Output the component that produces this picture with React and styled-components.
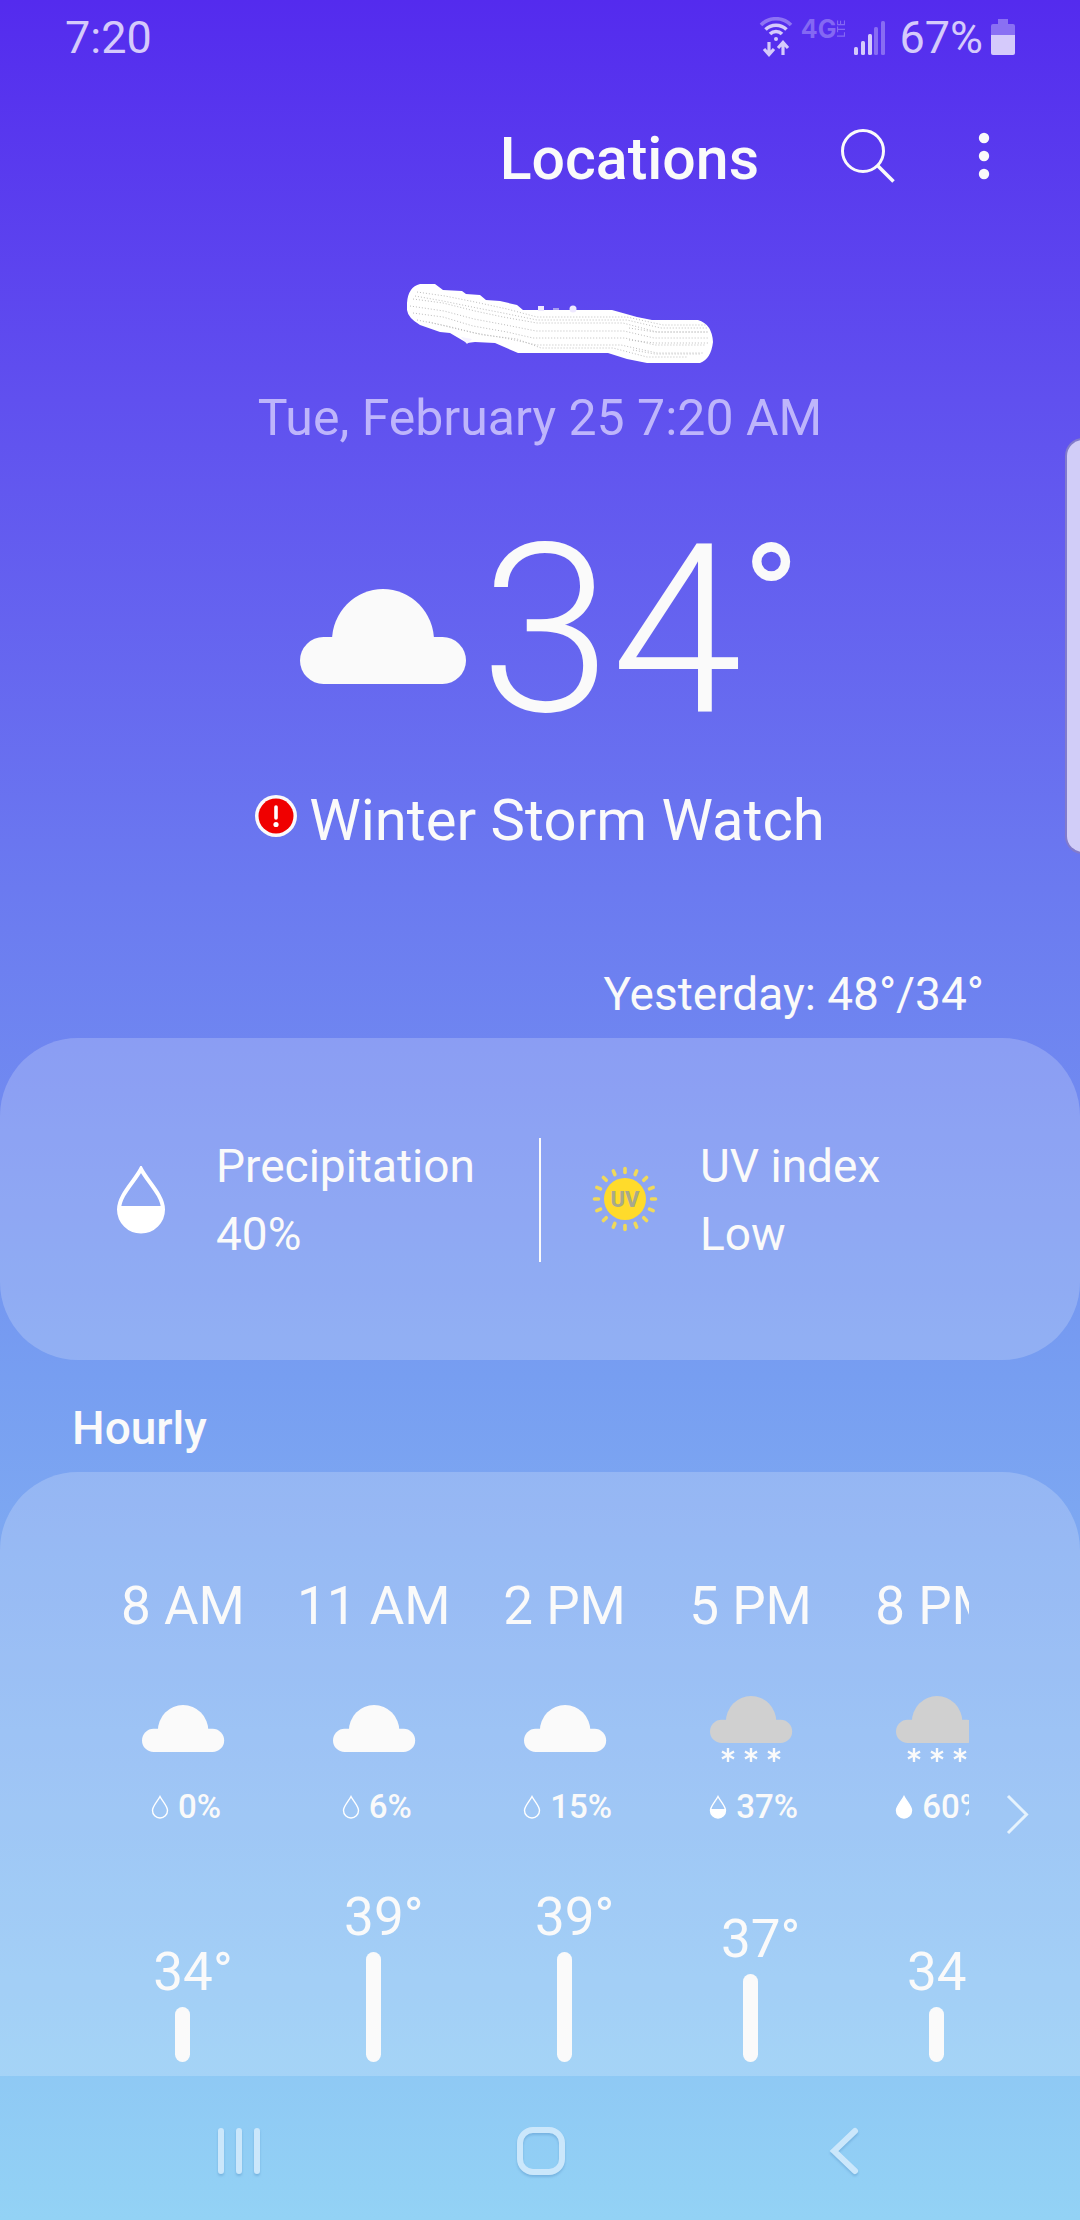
import React from "react";
import styled, { createGlobalStyle } from "styled-components";

const hours = [
  { time: "8 AM", sky: "cloudy", rain: 0, temp: 34 },
  { time: "11 AM", sky: "cloudy", rain: 6, temp: 39 },
  { time: "2 PM", sky: "cloudy", rain: 15, temp: 39 },
  { time: "5 PM", sky: "snow", rain: 37, temp: 37 },
  { time: "8 PM", sky: "snow", rain: 60, temp: 34 },
];

// 34° is the lowest bar, each degree above adds 11px
const barHeight = (temp) => 55 + (temp - 34) * 11;

const CloudShape = ({ fill }) => (
  <g fill={fill}>
    <rect x="0" y="48" width="166" height="47" rx="23.5" />
    <path d="M32 52a51 52 0 0 1 102 0v10H32z" />
  </g>
);

const Snowflake = ({ x }) => (
  <path
    d={`M${x} 54v14M${x - 6} 57.5l12 7M${x + 6} 57.5l-12 7`}
    stroke="#fafafa"
    strokeWidth="2.4"
  />
);

const SkyIcon = ({ sky }) => (
  <svg width="84" height="72" viewBox="0 0 84 72" aria-hidden="true">
    <g transform={sky === "snow" ? "translate(1 2) scale(.495)" : "translate(1 11) scale(.495)"}>
      <CloudShape fill={sky === "snow" ? "#d0d0d0" : "#fafafa"} />
    </g>
    {sky === "snow" && [19, 42, 65].map((x) => <Snowflake key={x} x={x} />)}
  </svg>
);

const DropIcon = ({ rain }) => (
  <svg width="18" height="24" viewBox="0 0 18 24" aria-hidden="true">
    <path
      d="M9 1.5C6.6 6.3 1.5 11.2 1.5 15.5a7.5 7.5 0 0 0 15 0C16.5 11.2 11.4 6.3 9 1.5z"
      fill={rain >= 50 ? "#fff" : "none"}
      stroke="#fff"
      strokeWidth="1.4"
    />
    {rain >= 30 && rain < 50 && (
      <path d="M1.5 14h15v1.5a7.5 7.5 0 0 1-15 0z" fill="#fff" />
    )}
  </svg>
);

const BigDropIcon = () => (
  <svg width="66" height="68" viewBox="0 0 66 68" aria-hidden="true">
    <path
      d="M33 3C27 15 11 29 11 43.5a22 22 0 0 0 44 0C55 29 39 15 33 3z"
      fill="none"
      stroke="#fff"
      strokeWidth="4"
    />
    <path d="M10 40h46v4a23 22.5 0 0 1-46 0z" fill="#fff" />
  </svg>
);

const UvIcon = () => (
  <svg width="66" height="68" viewBox="0 0 66 68" aria-hidden="true">
    <circle cx="33" cy="33" r="21" fill="#ffdb2b" />
    {Array.from({ length: 16 }, (_, i) => (
      <path
        key={i}
        d="M33 2.5v4"
        stroke="#f0d95a"
        strokeWidth="3.6"
        strokeLinecap="round"
        transform={`rotate(${i * 22.5} 33 33)`}
      />
    ))}
    <text
      x="33"
      y="41"
      textAnchor="middle"
      fontFamily="Roboto, sans-serif"
      fontSize="22"
      fontWeight="800"
      fill="#a8a98c"
    >
      UV
    </text>
  </svg>
);

const App = () => {
  return (
    <>
      <GlobalStyle />
      <Screen>
        <StatusBar>
          <span>7:20</span>
          <StatusIcons>
            <svg width="34" height="40" viewBox="0 0 34 40" aria-hidden="true">
              <g fill="none" stroke="#d5cafb" strokeWidth="3.6">
                <path d="M2 8a21 21 0 0 1 30 0" opacity=".45" />
                <path d="M6.5 12.5a15 15 0 0 1 21 0" />
                <path d="M11 17a8.5 8.5 0 0 1 12 0" />
                <path
                  d="M10 25v12M5 32l5 5.5 5-5.5M24 38V26M19 31l5-5.5 5 5.5"
                  strokeWidth="3.2"
                />
              </g>
              <circle cx="17" cy="22" r="2" fill="#d5cafb" />
            </svg>
            <Network>
              4G<Lte>LTE</Lte>
            </Network>
            <svg width="32" height="36" viewBox="0 0 32 36" aria-hidden="true">
              <g fill="#d5cafb">
                <rect x="0" y="28" width="4" height="8" rx="1.5" />
                <rect x="7" y="22" width="4" height="14" rx="1.5" />
                <rect x="14" y="15" width="4" height="21" rx="1.5" />
                <rect x="20" y="8" width="4" height="28" rx="1.5" opacity=".4" />
                <rect x="27" y="2" width="4" height="34" rx="1.5" opacity=".4" />
              </g>
            </svg>
            <Battery>67%</Battery>
            <svg width="24" height="36" viewBox="0 0 24 36" aria-hidden="true">
              <path d="M7 0h10v5h5a2 2 0 0 1 2 2v9H0V7a2 2 0 0 1 2-2h5z" fill="#8a70f3" />
              <path d="M0 16h24v18a2 2 0 0 1-2 2H2a2 2 0 0 1-2-2z" fill="#d5cafb" />
            </svg>
          </StatusIcons>
        </StatusBar>

        <Toolbar>
          <LocationsButton>Locations</LocationsButton>
          <IconButton aria-label="Search">
            <svg width="54" height="58" viewBox="0 0 54 58">
              <circle cx="22" cy="22" r="20.5" fill="none" stroke="#fafafa" strokeWidth="3" />
              <path d="M37 37l15.5 15.5" stroke="#fafafa" strokeWidth="3.5" />
            </svg>
          </IconButton>
          <IconButton aria-label="More options">
            <svg width="14" height="58" viewBox="0 0 14 58">
              <g fill="#fafafa">
                <circle cx="7" cy="9" r="5.2" />
                <circle cx="7" cy="27" r="5.2" />
                <circle cx="7" cy="45" r="5.2" />
              </g>
            </svg>
          </IconButton>
        </Toolbar>

        <Current>
          <svg width="346" height="88" viewBox="0 0 346 88" role="img" aria-label="Hidden city">
            <path
              d="M40 23Q41 7 53 4H68L76 10 95 11 99 14 113 15 119 20 133 21 150 25 156 30H245L270 37 285 40H331Q345 44 346 62 344 79 333 83H280L260 79 241 73H151L128 63 108 62 100 63 83 53 73 52 53 45Q41 38 40 30z"
              fill="#fff"
            />
            <path d="M171 26h6v5h-6z" fill="#eee8ff" />
            <circle cx="206" cy="29" r="3.5" fill="#eee8ff" />
            <path d="M186 29h6" stroke="#aaa0f0" strokeWidth="2" />
            <path d="M94 57l6 7 5-5z" fill="#f5f2ff" />
            <g fill="none" stroke="#bdbdbd" strokeWidth="1" strokeDasharray="1 2">
              <path d="M50 12l28 4 30 6 32 7 30 8h90l36 8h44" />
              <path d="M46 19l30 4 32 8 28 6 34 6h86l34 9h50" />
              <path d="M43 26l34 5 30 8 32 6 30 6h88l30 7h54" />
              <path d="M46 33l30 4 30 9 34 6 26 6h92l30 7h50" />
              <path d="M50 40l30 6 28 7 30 5 32 7h84l36 8h46" />
              <path d="M48 16l28 5 34 7 26 5 34 7h90l34 8h46" />
              <path d="M62 42l24 6 30 7 34 4 24 9h72l34 9h40" />
              <path d="M262 48l26 4h54M262 60l26 3h54M266 70l22 4h46" />
            </g>
          </svg>
          <DateLine>Tue, February 25 7:20 AM</DateLine>
          <TempRow>
            <svg width="166" height="106" viewBox="0 -11 166 106" aria-hidden="true">
              <CloudShape fill="#fafafa" />
            </svg>
            <Temp>34</Temp>
            <Degree>°</Degree>
          </TempRow>
          <AlertLink href="#alert">
            <svg width="42" height="50" viewBox="0 0 42 50" aria-hidden="true">
              <circle cx="21" cy="21" r="21" fill="#fafafa" />
              <circle cx="21" cy="21" r="17.5" fill="#f00000" />
              <path d="M21 12v11" stroke="#fff" strokeWidth="3.6" strokeLinecap="round" />
              <circle cx="21" cy="29.5" r="2.6" fill="#fff" />
            </svg>
            Winter Storm Watch
          </AlertLink>
        </Current>

        <Yesterday>Yesterday: 48°/34°</Yesterday>

        <DetailCard>
          <Detail $left={108}>
            <BigDropIcon />
            <DetailText>
              <div>Precipitation</div>
              <div>40%</div>
            </DetailText>
          </Detail>
          <Divider />
          <Detail $left={51}>
            <UvIcon />
            <DetailText>
              <div>UV index</div>
              <div>Low</div>
            </DetailText>
          </Detail>
        </DetailCard>

        <SectionTitle>Hourly</SectionTitle>

        <HourlyCard>
          <HourList>
            {hours.map((hour) => (
              <Hour key={hour.time}>
                <Time>{hour.time}</Time>
                <SkyIcon sky={hour.sky} />
                <Rain>
                  <DropIcon rain={hour.rain} />
                  {hour.rain}%
                </Rain>
                <BarArea>
                  <HourTemp>{hour.temp}°</HourTemp>
                  <Bar style={{ height: barHeight(hour.temp) }} />
                </BarArea>
              </Hour>
            ))}
          </HourList>
          <NextButton aria-label="Later hours">
            <svg width="24" height="48" viewBox="0 0 24 48">
              <path d="M2 2l18.5 18.5L2 39" fill="none" stroke="#e6f3fd" strokeWidth="3" />
            </svg>
          </NextButton>
        </HourlyCard>

        <NavBar>
          <IconButton aria-label="Recent apps">
            <NavIcon viewBox="0 0 50 56">
              <path d="M7 11v40M25 11v40M43 11v40" />
            </NavIcon>
          </IconButton>
          <IconButton aria-label="Home">
            <NavIcon viewBox="0 0 50 56">
              <rect x="4" y="10" width="42" height="42" rx="13" />
            </NavIcon>
          </IconButton>
          <IconButton aria-label="Back">
            <NavIcon viewBox="0 0 50 56">
              <path d="M37 11L16 31l21 20" />
            </NavIcon>
          </IconButton>
        </NavBar>

        <EdgeHandle />
      </Screen>
    </>
  );
};

export default App;

const GlobalStyle = createGlobalStyle`
  body {
    margin: 0;
    background: #93d2f5;
    font-family: Roboto, sans-serif;
    color: #fafafa;
  }

  svg {
    display: block;
    flex-shrink: 0;
  }

  button {
    background: none;
    border: none;
    color: inherit;
    cursor: pointer;
    font: inherit;
    padding: 0;
  }
`;

const Screen = styled.div`
  position: relative;
  display: flex;
  flex-direction: column;
  min-height: 100vh;
  overflow: hidden;
  background: linear-gradient(
    #542bee 0%,
    #6050ef 18%,
    #6b7af0 40%,
    #779ef1 62%,
    #85b4f3 78%,
    #93d2f5 100%
  );
`;

const StatusBar = styled.div`
  display: flex;
  align-items: center;
  justify-content: space-between;
  height: 74px;
  padding: 0 65px;
  font-size: 45px;
  color: #d5cafb;
`;

const StatusIcons = styled.div`
  display: flex;
  align-items: center;
  gap: 8px;
`;

const Network = styled.span`
  display: flex;
  align-items: center;
  align-self: flex-start;
  font-family: Inter, sans-serif;
  font-size: 25px;
  font-weight: 700;
  line-height: 36px;
  color: #8468f3;
`;

const Lte = styled.span`
  writing-mode: vertical-rl;
  transform: rotate(180deg);
  font-size: 10px;
  font-weight: 600;
  line-height: 10px;
`;

const Battery = styled.span`
  padding-left: 5px;
`;

const Toolbar = styled.header`
  display: flex;
  align-items: center;
  justify-content: flex-end;
  gap: 82px;
  height: 168px;
  padding-right: 89px;
`;

const IconButton = styled.button`
  display: flex;
  align-items: center;
  justify-content: center;
`;

const LocationsButton = styled.button`
  && {
    font-size: 59px;
    font-weight: 500;
  }
`;

const Current = styled.main`
  display: flex;
  flex-direction: column;
  align-items: center;
  padding-top: 38px;
`;

const DateLine = styled.div`
  margin-top: 20px;
  font-size: 50px;
  line-height: 60px;
  color: #beb5fb;
`;

const TempRow = styled.div`
  display: flex;
  align-items: center;
  margin-top: 63px;
  padding-left: 20px;
`;

const Temp = styled.span`
  padding-left: 14px;
  font-size: 236px;
  font-weight: 300;
  line-height: 240px;
`;

const Degree = styled.span`
  align-self: flex-start;
  font-size: 154px;
  line-height: 180px;
`;

const AlertLink = styled.a`
  display: flex;
  align-items: center;
  gap: 12px;
  margin-top: 33px;
  font-size: 58px;
  line-height: 72px;
  color: inherit;
  text-decoration: none;
`;

const Yesterday = styled.div`
  padding: 110px 96px 16px;
  font-size: 46px;
  line-height: 56px;
  text-align: right;
`;

const DetailCard = styled.section`
  display: grid;
  grid-template-columns: 1fr 2px 1fr;
  align-items: center;
  padding: 94px 0 92px;
  border-radius: 78px;
  background: rgba(255, 255, 255, 0.2);
`;

const Detail = styled.div`
  display: flex;
  align-items: center;
  gap: 42px;
  min-width: 0;
  padding-left: ${({ $left }) => $left}px;
`;

const DetailText = styled.div`
  font-size: 46px;
  line-height: 68px;
`;

const Divider = styled.div`
  height: 124px;
  background: #fafafa;
`;

const SectionTitle = styled.h2`
  margin: 0;
  padding: 40px 72px 16px;
  font-size: 46px;
  font-weight: 500;
  line-height: 56px;
`;

const HourlyCard = styled.section`
  display: flex;
  flex: 1;
  padding: 102px 0 14px 90px;
  border-radius: 78px 78px 0 0;
  background: rgba(255, 255, 255, 0.2);
`;

const HourList = styled.div`
  display: flex;
  flex: 1;
  min-width: 0;
  overflow: hidden;
`;

const Hour = styled.div`
  display: flex;
  flex-direction: column;
  flex-shrink: 0;
  align-items: center;
  box-sizing: border-box;
  min-width: 186px;
  padding: 0 21px;
`;

const Time = styled.div`
  margin-bottom: 56px;
  font-size: 53px;
  line-height: 64px;
`;

const Rain = styled.div`
  display: flex;
  align-items: center;
  gap: 9px;
  margin-top: 21px;
  padding-left: 6px;
  font-size: 33px;
  font-weight: 500;
  line-height: 40px;
`;

const BarArea = styled.div`
  display: flex;
  flex-direction: column;
  align-items: center;
  justify-content: flex-end;
  gap: 3px;
  height: 235px;
`;

/* left padding keeps the digits centred over the bar */
const HourTemp = styled.div`
  padding-left: 20px;
  font-size: 53px;
  line-height: 64px;
`;

const Bar = styled.div`
  width: 15px;
  border-radius: 8px;
  background: #fafafa;
`;

const NextButton = styled.button`
  display: flex;
  align-items: center;
  justify-content: center;
  width: 111px;
  && {
    padding-right: 14px;
  }
`;

const NavBar = styled.nav`
  display: grid;
  grid-template-columns: repeat(3, 1fr);
  height: 144px;
  padding: 0 86px 0 88px;
`;

const NavIcon = styled.svg`
  width: 50px;
  height: 56px;
  fill: none;
  stroke: #cbe7fb;
  stroke-width: 6px;
  stroke-linecap: round;
  filter: drop-shadow(0 2px 1px rgba(60, 120, 180, 0.3));
`;

const EdgeHandle = styled.div`
  position: absolute;
  top: 438px;
  right: -3px;
  width: 14px;
  height: 412px;
  border: 2px solid #827bcb;
  border-radius: 18px 0 0 18px;
  background: #d1cdf8;
`;
